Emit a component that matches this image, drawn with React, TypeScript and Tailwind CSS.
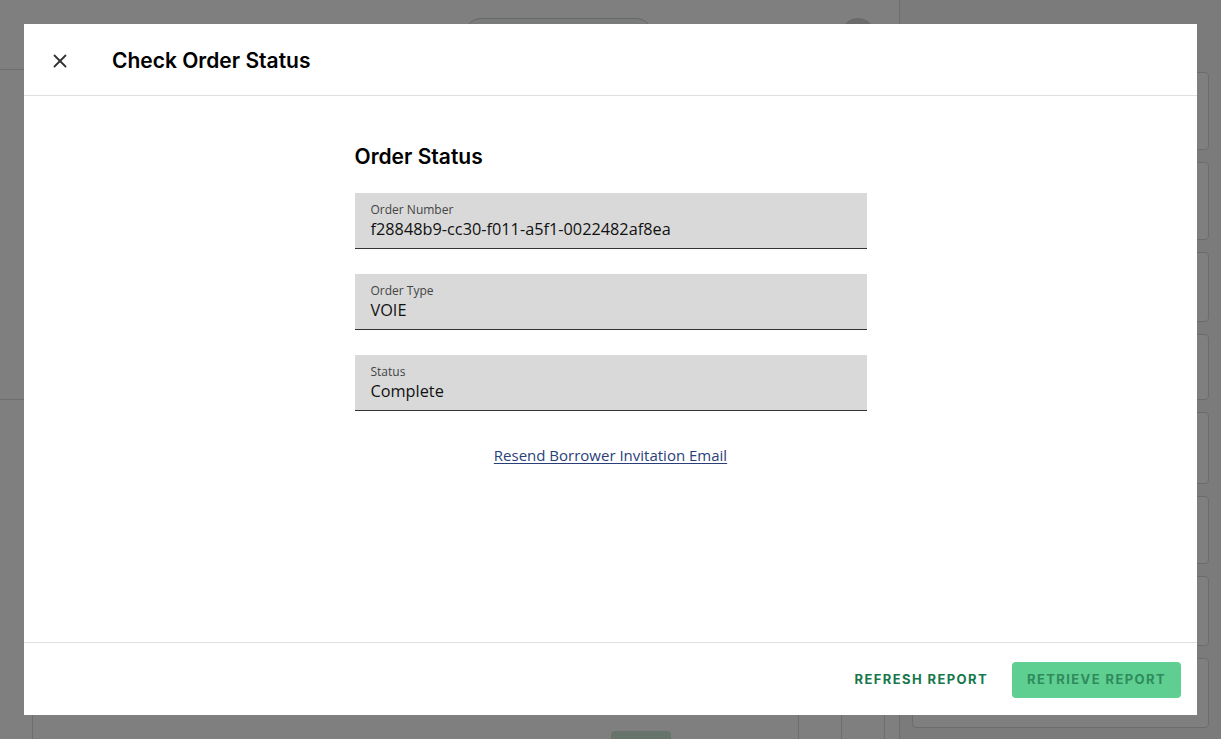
import { X } from 'lucide-react'

const fields = [
  { label: 'Order Number', value: 'f28848b9-cc30-f011-a5f1-0022482af8ea' },
  { label: 'Order Type', value: 'VOIE' },
  { label: 'Status', value: 'Complete' },
]

const sideCards = [78, 78, 70, 66, 72, 68, 70, 70]

function BackgroundPage() {
  return (
    <div className="flex h-full w-full bg-white">
      <div className="flex w-[900px] flex-col border-r border-[#dcdcdc]">
        <div className="flex h-[70px] items-center border-b border-[#dcdcdc] px-6">
          <div className="ml-[440px] h-[34px] w-[190px] rounded-full border border-[#cfcfcf] bg-[#f4f7f6]" />
          <div className="ml-[188px] h-[34px] w-[34px] rounded-full bg-[#d6d6d6]" />
        </div>
        <div className="h-[330px] border-b border-[#dcdcdc]" />
        <div className="flex-1" />
        <div className="ml-[32px] mr-[14px] flex h-[40px] border-x border-t border-[#dcdcdc]">
          <div className="flex flex-1 items-end pl-[578px]">
            <div className="h-[8px] w-[60px] rounded-t bg-[#cfe9d8]" />
          </div>
          <div className="w-[43px] border-l border-[#dcdcdc]" />
          <div className="w-[43px] border-l border-[#dcdcdc]" />
        </div>
      </div>
      <div className="flex flex-1 flex-col gap-[12px] bg-[#f7f7f7] px-[12px] pt-[72px]">
        {sideCards.map((h, i) => (
          <div key={i} style={{ height: h }} className="shrink-0 rounded border border-[#d9d9d9] bg-white" />
        ))}
        <div className="flex items-start justify-between px-[5px] pt-[8px]">
          <span className="text-[14px] leading-[18px] text-black" style={{ fontFamily: '"Open Sans", sans-serif' }}>
            Product &amp; Pricing
          </span>
          <div className="h-[14px] w-[70px] rounded bg-[#e9f2c8]" />
        </div>
      </div>
    </div>
  )
}

export default function App() {
  return (
    <div className="relative h-[739px] w-[1221px] overflow-hidden">
      <BackgroundPage />
      <div className="absolute inset-0 flex bg-black/50 p-[24px]">
        <div className="flex flex-1 flex-col bg-white">
          <header className="flex h-[72px] shrink-0 items-center border-b border-[#e0e0e0] px-[25px] pt-[2px]">
            <button type="button" className="flex h-[22px] w-[22px] items-center justify-center text-[#333]">
              <X size={22} strokeWidth={2} />
            </button>
            <h1
              className="ml-[41px] text-[21px] font-semibold text-black"
              style={{ fontFamily: 'Inter, sans-serif' }}
            >
              Check Order Status
            </h1>
          </header>

          <div className="flex flex-1 justify-center pt-[47px]">
            <div className="w-[512px]" style={{ fontFamily: '"Open Sans", sans-serif' }}>
              <h2
                className="text-[21px] font-semibold leading-[28px] text-black"
                style={{ fontFamily: 'Inter, sans-serif' }}
              >
                Order Status
              </h2>
              <div className="mt-[22px] flex flex-col gap-[25px]">
                {fields.map((f) => (
                  <div key={f.label} className="h-[56px] border-b border-[#333] bg-[#d9d9d9] px-[16px] pt-[9px]">
                    <div className="text-[12px] leading-[16px] text-[#444]">{f.label}</div>
                    <div className="text-[16.3px] leading-[22px] text-[#111]">{f.value}</div>
                  </div>
                ))}
              </div>
              <div className="mt-[32px] text-center">
                <a href="#" className="text-[15px] text-[#2a3f7a] underline underline-offset-2">
                  Resend Borrower Invitation Email
                </a>
              </div>
            </div>
          </div>

          <footer
            className="flex h-[73px] shrink-0 items-center justify-end gap-[24px] border-t border-[#e0e0e0] pr-[16px] pt-[1px]"
            style={{ fontFamily: 'Inter, sans-serif' }}
          >
            <button type="button" className="text-[13px] font-bold tracking-[1.4px] text-[#17774c]">
              REFRESH REPORT
            </button>
            <button
              type="button"
              className="h-[36px] w-[169px] rounded-[4px] bg-[#5fce91] text-[13px] font-bold tracking-[1.4px] text-[#2e8b5c]"
            >
              RETRIEVE REPORT
            </button>
          </footer>
        </div>
      </div>
    </div>
  )
}
